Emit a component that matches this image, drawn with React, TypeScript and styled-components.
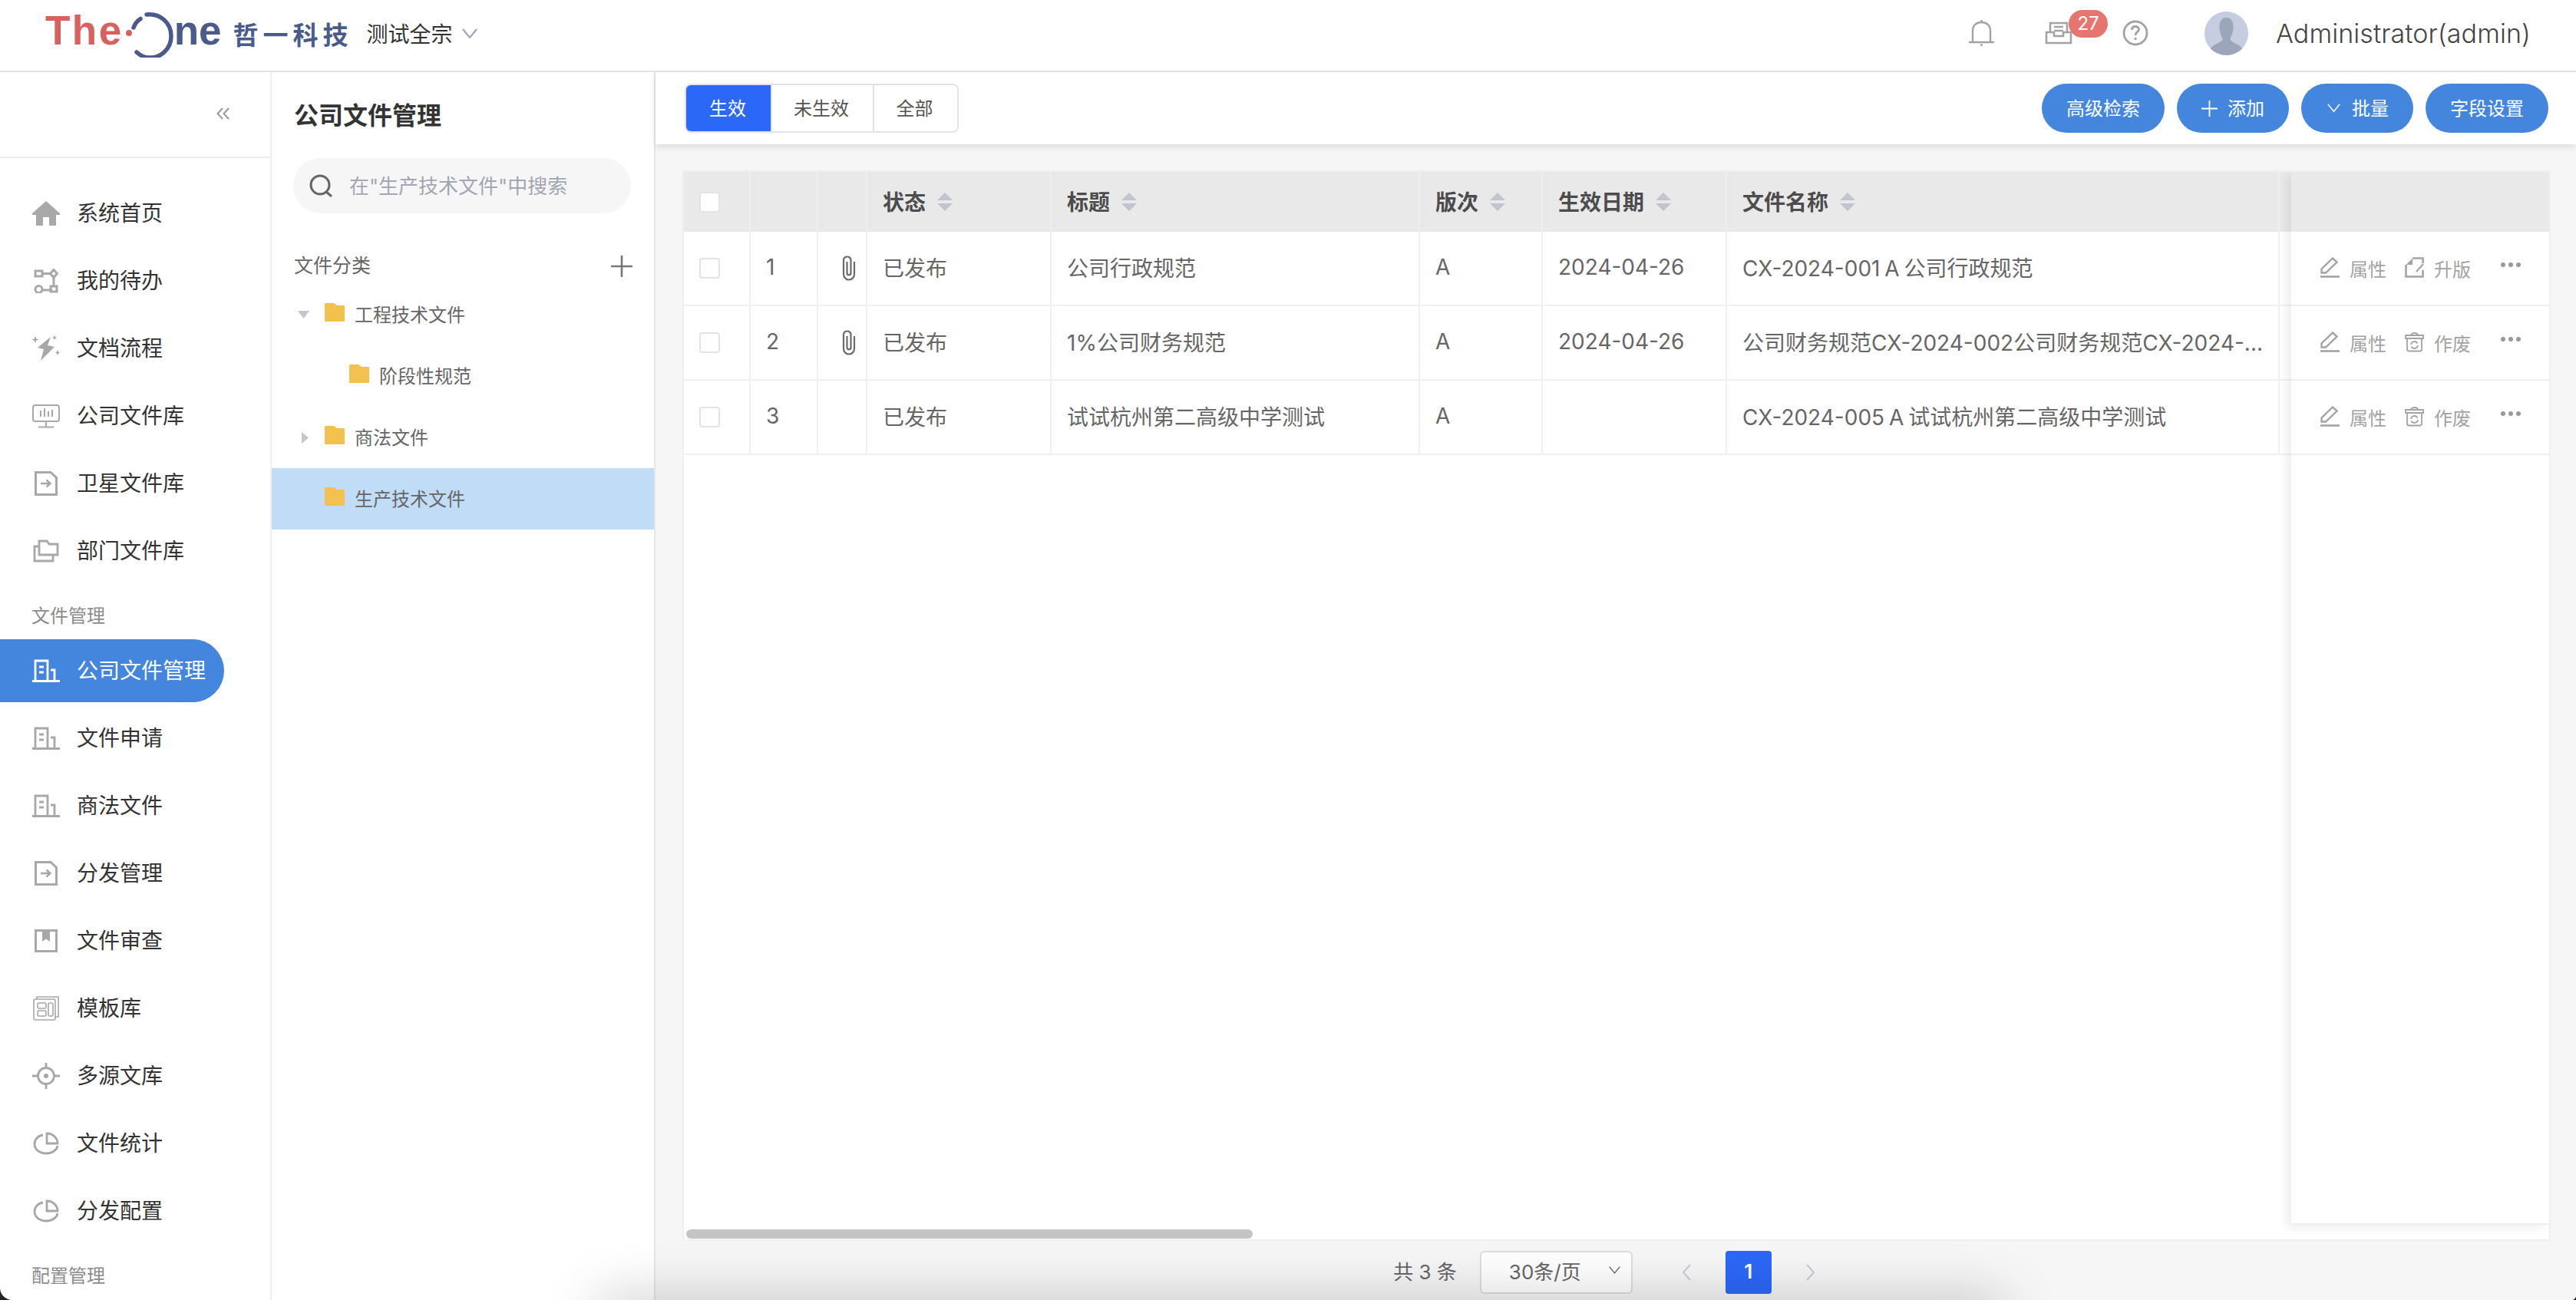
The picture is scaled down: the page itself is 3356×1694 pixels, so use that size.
import React from 'react'
import styled, { createGlobalStyle } from 'styled-components'

const GlobalStyle = createGlobalStyle`
  * { box-sizing: border-box; }
  html, body { margin: 0; padding: 0; background: #1d2a22; }
  body { font-family: Inter, "Noto Sans CJK SC", sans-serif; color: #333; }
`

const { Page, Shade } = {
  Page: styled.div`
    position: relative;
    width: 3356px;
    height: 1694px;
    overflow: hidden;
    background: #fff;
    border-radius: 0 0 6px 16px;
    display: flex;
    flex-direction: column;
  `,
  Shade: styled.div`
    position: absolute;
    left: 780px;
    bottom: -40px;
    width: 1830px;
    height: 40px;
    box-shadow: 0 0 70px rgba(0, 0, 0, 0.26);
    pointer-events: none;
    z-index: 5;
  `
}

/* ---------- header ---------- */

const { Header, Brand, BrandRed, BrandBlue, BrandMark, BrandCn, Scope, ScopeText, ScopeArrow, HeaderRight, IconSlot, Badge, Avatar, UserName } = {
  Header: styled.header`
    height: 94px;
    flex: none;
    border-bottom: 2px solid #e3e3e3;
    display: flex;
    align-items: center;
    padding: 0 59px 0 59px;
  `,
  Brand: styled.div`
    display: flex;
    align-items: center;
    height: 92px;
  `,
  BrandRed: styled.span`
    font-family: "Liberation Sans", sans-serif;
    font-weight: 700;
    font-size: 53px;
    line-height: 60px;
    color: #d9605c;
    letter-spacing: 2.5px;
    margin-top: -12px;
  `,
  BrandBlue: styled.span`
    font-family: "Liberation Sans", sans-serif;
    font-weight: 700;
    font-size: 53px;
    line-height: 60px;
    color: #4a5a8a;
    margin-top: -12px;
  `,
  BrandMark: styled.svg`
    width: 72px;
    height: 66px;
    margin: -8px -6px 0 0;
    flex: none;
  `,
  BrandCn: styled.span`
    margin-left: 15px;
    font-size: 33px;
    font-weight: 700;
    line-height: 40px;
    letter-spacing: 6px;
    color: #4a5a8a;
    white-space: nowrap;
  `,
  Scope: styled.div`
    display: flex;
    align-items: center;
    gap: 12px;
    margin: -6px 0 0 18px;
  `,
  ScopeText: styled.span`
    font-size: 28px;
    color: #333;
  `,
  ScopeArrow: styled.span`
    color: #9aa3b5;
  `,
  HeaderRight: styled.div`
    margin: -6px 0 0 auto;
    display: flex;
    align-items: center;
  `,
  IconSlot: styled.span<{ $ml: number }>`
    position: relative;
    display: flex;
    margin-left: ${({ $ml }) => $ml}px;
    color: #a3a3a3;
  `,
  Badge: styled.span`
    position: absolute;
    left: 31px;
    top: -15px;
    width: 51px;
    height: 36px;
    border-radius: 18px;
    background: #e5756f;
    color: #fff;
    font-size: 24px;
    line-height: 36px;
    text-align: center;
  `,
  Avatar: styled.svg`
    width: 57px;
    height: 57px;
    margin-left: 73px;
    border-radius: 50%;
    flex: none;
  `,
  UserName: styled.span`
    margin-left: 36px;
    font-size: 34px;
    font-weight: 300;
    letter-spacing: 0.1px;
    color: #444;
    white-space: nowrap;
  `
}

const Glyph = styled.svg`
  display: block;
  flex: none;
  fill: none;
  stroke: currentColor;
`

const BellIcon = () => (
  <Glyph width="35" height="35" viewBox="0 0 35 35" strokeWidth="2.4">
    <path d="M1 29 H34 M6 29 V14 C6 7 11 3 17.5 3 C24 3 29 7 29 14 V29" />
    <path d="M17.5 0 V3 M17.5 31 V34" />
  </Glyph>
)
const InboxIcon = () => (
  <Glyph width="36" height="30" viewBox="0 0 36 30" strokeWidth="2.6">
    <path d="M7 14 V2 H29 V14 M12 7 H24 M12 12 H24" />
    <path d="M2 14 H12 V19 H24 V14 H34 V28 H2 Z" />
  </Glyph>
)
const HelpIcon = () => (
  <Glyph width="34" height="34" viewBox="0 0 34 34" strokeWidth="2.8">
    <circle cx="17" cy="17" r="15" />
    <path d="M12.5 13 C12.5 10 14.5 8.5 17 8.5 C19.5 8.5 21.5 10 21.5 12.5 C21.5 15.5 17 15.5 17 20" />
    <path d="M17 23 V26" />
  </Glyph>
)
const ChevronDown = ({ size = 20, weight = 2 }: { size?: number; weight?: number }) => (
  <Glyph width={size} height={size * 0.65} viewBox="0 0 20 13" strokeWidth={weight}>
    <path d="M1 1 L10 12 L19 1" />
  </Glyph>
)

/* ---------- sidebar ---------- */

const { Body, Sidebar, Collapse, CollapseBtn, Nav, SectionLabel, NavItem, NavIcon, NavText } = {
  Body: styled.div`
    flex: 1;
    min-height: 0;
    display: flex;
  `,
  Sidebar: styled.aside`
    width: 354px;
    flex: none;
    border-right: 2px solid #efefef;
    display: flex;
    flex-direction: column;
  `,
  Collapse: styled.div`
    height: 112px;
    flex: none;
    border-bottom: 2px solid #efefef;
    display: flex;
    align-items: center;
    justify-content: flex-end;
    padding: 0 52px 0 0;
  `,
  CollapseBtn: styled.svg`
    width: 18px;
    height: 16px;
    fill: none;
    stroke: #9a9a9a;
    stroke-width: 2;
    margin-top: -2px;
  `,
  Nav: styled.nav`
    display: flex;
    flex-direction: column;
    gap: 6px;
    padding-top: 31px;
  `,
  SectionLabel: styled.div`
    height: 62px;
    padding: 15px 0 0 41px;
    font-size: 24px;
    line-height: 46px;
    color: #8c8c8c;
  `,
  NavItem: styled.a<{ $active?: boolean }>`
    width: 292px;
    height: 82px;
    flex: none;
    display: flex;
    align-items: center;
    gap: 22px;
    padding-left: 42px;
    border-radius: 0 41px 41px 0;
    font-size: 28px;
    color: ${({ $active }) => ($active ? '#fff' : '#333')};
    background: ${({ $active }) => ($active ? '#4486de' : 'transparent')};
  `,
  NavIcon: styled.span<{ $active?: boolean }>`
    width: 36px;
    height: 36px;
    display: flex;
    align-items: center;
    justify-content: center;
    color: ${({ $active }) => ($active ? '#fff' : '#a8a8a8')};
  `,
  NavText: styled.span`
    white-space: nowrap;
    padding-bottom: 4px;
  `
}

const HomeIcon = () => (
  <svg width="36" height="32" viewBox="0 0 36 32" fill="currentColor">
    <path d="M18 0 L36 16 V18 H31 V32 H22 V21 H14 V32 H5 V18 H0 V16 Z" />
  </svg>
)
const TodoIcon = () => (
  <Glyph width="32" height="32" viewBox="0 0 32 32" strokeWidth="3">
    <rect x="2" y="3" width="9" height="7" />
    <path d="M11 6.5 H21 M26 11 V23 M24 28 H12" />
    <path d="M26 1.5 L30.5 6.5 L26 11.5 L21.5 6.5 Z" />
    <rect x="22" y="23" width="8" height="7" />
    <circle cx="6.5" cy="27" r="4.5" />
  </Glyph>
)
const FlowIcon = () => (
  <svg width="36" height="34" viewBox="0 0 36 34" fill="currentColor">
    <path d="M24 2 L7 16 L15 18 L11 33 L29 15 L20 13 Z" />
    <path d="M4 1 L5.3 4.2 L8.5 5.5 L5.3 6.8 L4 10 L2.7 6.8 L-0.5 5.5 L2.7 4.2 Z" />
    <path d="M29 0 L30 2 L32 3 L30 4 L29 6 L28 4 L26 3 L28 2 Z" />
    <path d="M33 19 L34 21.5 L36 22.5 L34 23.5 L33 26 L32 23.5 L30 22.5 L32 21.5 Z" />
  </svg>
)
const ScreenIcon = () => (
  <Glyph width="36" height="31" viewBox="0 0 36 31" strokeWidth="2">
    <rect x="1" y="1" width="34" height="21" rx="3" />
    <path d="M11 8 V16 M16 5 V16 M21 9 V16 M26 7 V16 M18 22 V29 M8 29.5 H28" />
  </Glyph>
)
const FileInIcon = () => (
  <Glyph width="30" height="32" viewBox="0 0 30 32" strokeWidth="3">
    <path d="M1.5 1.5 H21 L28.5 8.5 V30.5 H1.5 Z" />
    <path d="M8 16 H20 M15.5 11.5 L20.5 16 L15.5 20.5" strokeWidth="2.4" />
  </Glyph>
)
const FoldersIcon = () => (
  <Glyph width="34" height="30" viewBox="0 0 34 30" strokeWidth="2.8">
    <path d="M8 20 V2 H18 L21 6 H32 V20 Z" />
    <path d="M8 9 H2 V28 H26 V20" />
  </Glyph>
)
const BuildingIcon = () => (
  <Glyph width="36" height="30" viewBox="0 0 36 30" strokeWidth="2.8">
    <path d="M0 28.5 H36 M4 28 V2 H20 V28 M9 10 H15 M9 17 H15" />
    <path d="M24 14 H29 V28" />
  </Glyph>
)
const BookmarkIcon = () => (
  <Glyph width="30" height="30" viewBox="0 0 30 30" strokeWidth="3">
    <rect x="1.5" y="1.5" width="27" height="27" />
    <path d="M10 2 H20 V16 L15 12.5 L10 16 Z" fill="currentColor" stroke="none" />
  </Glyph>
)
const TemplateIcon = () => (
  <Glyph width="34" height="32" viewBox="0 0 34 32" strokeWidth="1.6">
    <rect x="1" y="4" width="28" height="27" rx="2" />
    <path d="M5 4 V1 H33 V27 H29" />
    <rect x="6" y="9" width="11" height="7" rx="1.5" />
    <rect x="6" y="19" width="11" height="7" rx="1.5" />
    <rect x="20" y="9" width="6" height="17" rx="2" />
  </Glyph>
)
const TargetIcon = () => (
  <Glyph width="36" height="36" viewBox="0 0 36 36" strokeWidth="2.8">
    <circle cx="18" cy="18" r="10.5" />
    <circle cx="18" cy="18" r="3" fill="currentColor" stroke="none" />
    <path d="M18 1 V7 M18 29 V35 M0 18 H7 M29 18 H36" />
  </Glyph>
)
const PieIcon = () => (
  <Glyph width="34" height="30" viewBox="0 0 34 30" strokeWidth="2.8">
    <path d="M13 4 C6 5 2 10 2 16 C2 23 9 28 17 28 C25 28 31 24 32 18" />
    <path d="M18 2 V15 H32 C32 8 26 2 18 2 Z" />
  </Glyph>
)

type NavEntry = { label: string; icon?: React.ReactNode; active?: boolean; section?: boolean }

const navEntries: NavEntry[] = [
  { label: '系统首页', icon: <HomeIcon /> },
  { label: '我的待办', icon: <TodoIcon /> },
  { label: '文档流程', icon: <FlowIcon /> },
  { label: '公司文件库', icon: <ScreenIcon /> },
  { label: '卫星文件库', icon: <FileInIcon /> },
  { label: '部门文件库', icon: <FoldersIcon /> },
  { label: '文件管理', section: true },
  { label: '公司文件管理', icon: <BuildingIcon />, active: true },
  { label: '文件申请', icon: <BuildingIcon /> },
  { label: '商法文件', icon: <BuildingIcon /> },
  { label: '分发管理', icon: <FileInIcon /> },
  { label: '文件审查', icon: <BookmarkIcon /> },
  { label: '模板库', icon: <TemplateIcon /> },
  { label: '多源文库', icon: <TargetIcon /> },
  { label: '文件统计', icon: <PieIcon /> },
  { label: '分发配置', icon: <PieIcon /> },
  { label: '配置管理', section: true }
]

/* ---------- tree panel ---------- */

const { Panel, PanelTitle, Search, SearchText, CatRow, CatLabel, Tree, TreeRow, TreeArrow, TreeFolder, TreeText } = {
  Panel: styled.section`
    width: 500px;
    flex: none;
    border-right: 2px solid #e6e6e6;
    display: flex;
    flex-direction: column;
  `,
  PanelTitle: styled.h2`
    margin: 35px 0 33px 29px;
    font-size: 32px;
    line-height: 44px;
    font-weight: 600;
    color: #333;
  `,
  Search: styled.div`
    height: 72px;
    width: 440px;
    margin-left: 28px;
    border-radius: 36px;
    background: #f6f6f7;
    display: flex;
    align-items: center;
    gap: 22px;
    padding-left: 21px;
    color: #666;
  `,
  SearchText: styled.span`
    font-size: 26px;
    color: #a2a7b2;
    white-space: nowrap;
    padding-bottom: 4px;
  `,
  CatRow: styled.div`
    height: 40px;
    margin: 49px 28px 3px 29px;
    display: flex;
    align-items: center;
    justify-content: space-between;
    color: #777;
  `,
  CatLabel: styled.span`
    font-size: 25px;
    color: #666;
    padding-bottom: 6px;
  `,
  Tree: styled.div`
    display: flex;
    flex-direction: column;
  `,
  TreeRow: styled.div<{ $depth: number; $selected?: boolean }>`
    height: 80px;
    display: flex;
    align-items: center;
    padding-left: ${({ $depth }) => 34 + $depth * 32}px;
    background: ${({ $selected }) => ($selected ? '#c0dcf7' : 'transparent')};
  `,
  TreeArrow: styled.span<{ $inset?: boolean }>`
    width: 35px;
    flex: none;
    display: flex;
    padding-left: ${({ $inset }) => ($inset ? 5 : 0)}px;
    color: #c2c6d0;
  `,
  TreeFolder: styled.svg`
    width: 26px;
    height: 24px;
    flex: none;
    margin-top: -6px;
    fill: #f2c14e;
  `,
  TreeText: styled.span`
    margin-left: 13px;
    font-size: 24px;
    color: #666;
    white-space: nowrap;
    padding-bottom: 4px;
  `
}

const FolderIcon = () => (
  <TreeFolder viewBox="0 0 26 24">
    <path d="M1 0 H12 L16 3 H25 Q26 3 26 4 V23 Q26 24 25 24 H1 Q0 24 0 23 V1 Q0 0 1 0 Z" />
  </TreeFolder>
)
const ArrowDown = () => (
  <svg width="15" height="10" viewBox="0 0 15 10" fill="currentColor"><path d="M0 0 H15 L7.5 10 Z" /></svg>
)
const ArrowRight = () => (
  <svg width="9" height="15" viewBox="0 0 9 15" fill="currentColor"><path d="M0 0 L9 7.5 L0 15 Z" /></svg>
)

const treeRows = [
  { label: '工程技术文件', depth: 0, arrow: 'down' },
  { label: '阶段性规范', depth: 1 },
  { label: '商法文件', depth: 0, arrow: 'right' },
  { label: '生产技术文件', depth: 0, selected: true }
]

/* ---------- main ---------- */

const { Main, Toolbar, Tabs, Tab, Actions, PillButton, BtnIcon, Content, TableCard, DataTable, HeadCell, Cell, CheckCell, ClipCell, HeadInner, HeadText, Check, SortIcon, SortUp, SortDown, Pinned, PinnedHead, PinnedRow, RowAction, ActionText, MoreDots, Scrollbar, Footer, Total, PageSelect, PageArrow, PageNum } = {
  Main: styled.main`
    flex: 1;
    min-width: 0;
    display: flex;
    flex-direction: column;
    background: #f6f6f7;
  `,
  Toolbar: styled.div`
    height: 94px;
    flex: none;
    background: #fff;
    box-shadow: 0 4px 9px rgba(0, 0, 0, 0.1);
    position: relative;
    display: flex;
    align-items: center;
    justify-content: space-between;
    padding: 0 36px 0 38px;
  `,
  Tabs: styled.div`
    display: flex;
    height: 64px;
    border-radius: 8px;
    border: 2px solid #e2e2e8;
    overflow: hidden;
  `,
  Tab: styled.div<{ $w: number; $active?: boolean }>`
    width: ${({ $w }) => $w}px;
    display: flex;
    align-items: center;
    justify-content: center;
    padding: 0 ${({ $active }) => ($active ? 0 : 3)}px 3px 0;
    font-size: 24px;
    color: ${({ $active }) => ($active ? '#fff' : '#555')};
    background: ${({ $active }) => ($active ? '#2c68f7' : '#fff')};
    margin: ${({ $active }) => ($active ? '-2px 0 -2px -2px' : '0')};
    & + & {
      border-left: 2px solid #e2e2e8;
    }
  `,
  Actions: styled.div`
    display: flex;
    gap: 16px;
  `,
  PillButton: styled.button`
    height: 64px;
    padding: 0 32px 3px;
    border: 0;
    border-radius: 32px;
    background: #4486de;
    color: #fff;
    font: inherit;
    font-size: 24px;
    display: flex;
    align-items: center;
    gap: 13px;
  `,
  BtnIcon: styled.span`
    width: 21px;
    display: flex;
    justify-content: center;
    margin-top: 3px;
  `,
  Content: styled.div`
    flex: 1;
    min-height: 0;
    padding: 34px 33px 0 35px;
  `,
  TableCard: styled.div`
    position: relative;
    height: 1395px;
    background: #fff;
    border: 2px solid #eeeef4;
    overflow: hidden;
  `,
  DataTable: styled.table`
    border-collapse: separate;
    border-spacing: 0;
    table-layout: fixed;
    width: 2430px;
  `,
  HeadCell: styled.th`
    height: 78px;
    padding: 0 0 0 20px;
    background: #e9e9ea;
    border-right: 2px solid #eeeef2;
    font-size: 28px;
    font-weight: 600;
    color: #4c4c4c;
    text-align: left;
  `,
  Cell: styled.td`
    height: 97px;
    padding: 0 20px 4px;
    border-right: 2px solid #f0f0f4;
    border-bottom: 2px solid #f0f0f4;
    font-size: 28px;
    word-spacing: -2px;
    color: #666;
    white-space: nowrap;
    overflow: hidden;
  `,
  CheckCell: styled.td`
    height: 97px;
    padding: 0 0 0 20px;
    border-right: 2px solid #f0f0f4;
    border-bottom: 2px solid #f0f0f4;
  `,
  ClipCell: styled.td`
    height: 97px;
    padding: 0 0 0 31px;
    border-right: 2px solid #f0f0f4;
    border-bottom: 2px solid #f0f0f4;
    color: #6a6a6a;
  `,
  HeadInner: styled.div`
    display: flex;
    align-items: center;
    gap: 15px;
  `,
  HeadText: styled.span`
    padding-bottom: 3px;
  `,
  Check: styled.span<{ $head?: boolean }>`
    display: block;
    width: 27px;
    height: 27px;
    border: 2px solid ${({ $head }) => ($head ? '#e4e4e8' : '#e3e3e8')};
    border-radius: 4px;
    background: #fff;
  `,
  SortIcon: styled.span`
    display: flex;
    flex-direction: column;
    gap: 4px;
  `,
  SortUp: styled.span`
    width: 0;
    height: 0;
    border-left: 10px solid transparent;
    border-right: 10px solid transparent;
    border-bottom: 10px solid #c0c4ce;
  `,
  SortDown: styled.span`
    width: 0;
    height: 0;
    border-left: 10px solid transparent;
    border-right: 10px solid transparent;
    border-top: 10px solid #c0c4ce;
  `,
  Pinned: styled.div`
    position: absolute;
    top: 0;
    right: 0;
    width: 336px;
    height: 1372px;
    background: #fff;
    border-bottom: 2px solid #eeeef4;
    box-shadow: -6px 4px 12px rgba(0, 0, 0, 0.07);
  `,
  PinnedHead: styled.div`
    height: 78px;
    background: #e9e9ea;
  `,
  PinnedRow: styled.div`
    height: 97px;
    border-bottom: 2px solid #f0f0f4;
    display: flex;
    align-items: center;
    padding: 0 0 2px 38px;
  `,
  RowAction: styled.span<{ $w: number }>`
    width: ${({ $w }) => $w}px;
    flex: none;
    display: flex;
    align-items: center;
    gap: 13px;
    color: #a3a3a3;
  `,
  ActionText: styled.span`
    font-size: 24px;
    line-height: 30px;
    margin-top: 6px;
  `,
  MoreDots: styled.span`
    width: 26px;
    display: flex;
    justify-content: space-between;
    margin-top: -8px;
    & > i {
      width: 6px;
      height: 6px;
      border-radius: 50%;
      background: #999;
    }
  `,
  Scrollbar: styled.div`
    position: absolute;
    left: 3px;
    bottom: 1px;
    width: 738px;
    height: 12px;
    border-radius: 6px;
    background: #c4c4c4;
  `,
  Footer: styled.div`
    display: flex;
    align-items: center;
    justify-content: center;
    height: 56px;
    margin: 13px 10px 0 0;
  `,
  Total: styled.span`
    font-size: 26px;
    color: #666;
    margin-right: 30px;
    padding-bottom: 6px;
  `,
  PageSelect: styled.div`
    width: 199px;
    height: 56px;
    padding: 0 14px 6px 36px;
    border: 2px solid #dcdce2;
    border-radius: 6px;
    background: #fff;
    font-size: 26px;
    color: #666;
    display: flex;
    align-items: center;
    justify-content: space-between;
    margin-right: 42px;
  `,
  PageArrow: styled.span`
    width: 57px;
    height: 56px;
    display: flex;
    align-items: center;
    justify-content: center;
    color: #c9ccd4;
  `,
  PageNum: styled.span`
    width: 60px;
    height: 56px;
    margin: 0 22px;
    padding-bottom: 4px;
    border-radius: 4px;
    background: #2c68f7;
    color: #fff;
    font-size: 26px;
    font-weight: 600;
    display: flex;
    align-items: center;
    justify-content: center;
  `
}

const PlusIcon = ({ size, weight }: { size: number; weight: number }) => (
  <Glyph width={size} height={size} viewBox="0 0 28 28" strokeWidth={weight}>
    <path d="M14 0 V28 M0 14 H28" />
  </Glyph>
)
const SearchIcon = () => (
  <Glyph width="30" height="30" viewBox="0 0 30 30" strokeWidth="3">
    <circle cx="14" cy="14" r="12" />
    <path d="M22 23 L29 29" />
  </Glyph>
)
const ClipIcon = () => (
  <Glyph width="18" height="33" viewBox="0 0 18 33" strokeWidth="2.2">
    <path d="M6.5 8 V23 C6.5 26 11.5 26 11.5 23 V6 C11.5 0 2 0 2 6 V24 C2 34 16 34 16 24 V8" />
  </Glyph>
)
const PenIcon = () => (
  <Glyph width="25" height="27" viewBox="0 0 25 27" strokeWidth="2.4">
    <path d="M0 25.5 H25" strokeWidth="2.6" />
    <path d="M1.5 20.5 V15.5 L16 1.5 L21.5 6.5 L7 20.5 Z" />
  </Glyph>
)
const UpgradeIcon = () => (
  <Glyph width="25" height="27" viewBox="0 0 25 27" strokeWidth="2.6">
    <path d="M10 1.5 H23.5 V8 M23.5 17 V25.5 H1.5 V10" />
    <path d="M10 1.5 L1.5 10 H10 Z" fill="currentColor" stroke="none" />
    <path d="M15 19 L24 9" strokeWidth="2.2" />
  </Glyph>
)
const TrashIcon = () => (
  <Glyph width="25" height="27" viewBox="0 0 25 27" strokeWidth="1.8">
    <path d="M1 5 H24 V9 H1 Z M8 5 C8 1 17 1 17 5 M3 9 V23 Q3 25.5 5.5 25.5 H19.5 Q22 25.5 22 23 V9" />
    <path d="M8 17 A4.5 4.5 0 0 1 16.5 15.5 M17 18 A4.5 4.5 0 0 1 8.5 19.5" />
  </Glyph>
)

const Sort = () => (
  <SortIcon>
    <SortUp />
    <SortDown />
  </SortIcon>
)

const columns = [
  { key: 'check', width: 87 },
  { key: 'index', width: 88 },
  { key: 'clip', width: 64 },
  { key: 'status', width: 240, title: '状态' },
  { key: 'title', width: 480, title: '标题' },
  { key: 'rev', width: 160, title: '版次' },
  { key: 'date', width: 240, title: '生效日期' },
  { key: 'name', width: 720, title: '文件名称' }
]

const rows = [
  { id: 1, clip: true, status: '已发布', title: '公司行政规范', rev: 'A', date: '2024-04-26', name: 'CX-2024-001 A 公司行政规范', upgrade: true },
  { id: 2, clip: true, status: '已发布', title: '1%公司财务规范', rev: 'A', date: '2024-04-26', name: '公司财务规范CX-2024-002公司财务规范CX-2024-...' },
  { id: 3, clip: false, status: '已发布', title: '试试杭州第二高级中学测试', rev: 'A', date: '', name: 'CX-2024-005 A 试试杭州第二高级中学测试' }
]

function App() {
  return (
    <Page>
      <GlobalStyle />
      <Header>
        <Brand>
          <BrandRed>The</BrandRed>
          <BrandMark viewBox="0 0 72 66" fill="none">
            <circle cx="7" cy="34" r="4" fill="#d9605c" />
            <path d="M13 27 C14.5 22.5 17.5 18.5 22 15.5" stroke="#4a5a8a" strokeWidth="5.5" strokeLinecap="round" />
            <path d="M30 10 C47 8 62 20 62 38 C62 55 48 67 33 66 C27 66 22 63.5 17 59" stroke="#4a5a8a" strokeWidth="5.5" strokeLinecap="round" />
          </BrandMark>
          <BrandBlue>ne</BrandBlue>
          <BrandCn>哲一科技</BrandCn>
        </Brand>
        <Scope>
          <ScopeText>测试全宗</ScopeText>
          <ScopeArrow><ChevronDown /></ScopeArrow>
        </Scope>
        <HeaderRight>
          <IconSlot $ml={0}><BellIcon /></IconSlot>
          <IconSlot $ml={65}>
            <InboxIcon />
            <Badge>27</Badge>
          </IconSlot>
          <IconSlot $ml={65}><HelpIcon /></IconSlot>
          <Avatar viewBox="0 0 57 57">
            <rect width="57" height="57" fill="#c6cde0" />
            <path d="M28.5 8 C36 8 38 15 37.5 22 C37 29 34 33 33.5 36 C33.5 40 45 42 50 49 L50 57 H7 L7 49 C12 42 23.5 40 23.5 36 C23 33 20 29 19.5 22 C19 15 21 8 28.5 8 Z" fill="#9ba5bb" />
          </Avatar>
          <UserName>Administrator(admin)</UserName>
        </HeaderRight>
      </Header>

      <Body>
        <Sidebar>
          <Collapse>
            <CollapseBtn viewBox="0 0 18 16">
              <path d="M8 1 L1.5 8 L8 15 M16 1 L9.5 8 L16 15" />
            </CollapseBtn>
          </Collapse>
          <Nav>
            {navEntries.map((entry) =>
              entry.section ? (
                <SectionLabel key={entry.label}>{entry.label}</SectionLabel>
              ) : (
                <NavItem key={entry.label} $active={entry.active}>
                  <NavIcon $active={entry.active}>{entry.icon}</NavIcon>
                  <NavText>{entry.label}</NavText>
                </NavItem>
              )
            )}
          </Nav>
        </Sidebar>

        <Panel>
          <PanelTitle>公司文件管理</PanelTitle>
          <Search>
            <SearchIcon />
            <SearchText>在"生产技术文件"中搜索</SearchText>
          </Search>
          <CatRow>
            <CatLabel>文件分类</CatLabel>
            <PlusIcon size={28} weight={2.6} />
          </CatRow>
          <Tree>
            {treeRows.map((row) => (
              <TreeRow key={row.label} $depth={row.depth} $selected={row.selected}>
                <TreeArrow $inset={row.arrow === 'right'}>
                  {row.arrow === 'down' && <ArrowDown />}
                  {row.arrow === 'right' && <ArrowRight />}
                </TreeArrow>
                <FolderIcon />
                <TreeText>{row.label}</TreeText>
              </TreeRow>
            ))}
          </Tree>
        </Panel>

        <Main>
          <Toolbar>
            <Tabs>
              <Tab $w={112} $active>生效</Tab>
              <Tab $w={133}>未生效</Tab>
              <Tab $w={110}>全部</Tab>
            </Tabs>
            <Actions>
              <PillButton>高级检索</PillButton>
              <PillButton><BtnIcon><PlusIcon size={21} weight={2.4} /></BtnIcon>添加</PillButton>
              <PillButton><BtnIcon><ChevronDown size={17} weight={1.8} /></BtnIcon>批量</PillButton>
              <PillButton>字段设置</PillButton>
            </Actions>
          </Toolbar>

          <Content>
            <TableCard>
              <DataTable>
                <colgroup>
                  {columns.map((col) => (
                    <col key={col.key} style={{ width: col.width }} />
                  ))}
                  <col />
                </colgroup>
                <thead>
                  <tr>
                    {columns.map((col) => (
                      <HeadCell key={col.key}>
                        {col.key === 'check' && <Check $head />}
                        {col.title && (
                          <HeadInner>
                            <HeadText>{col.title}</HeadText>
                            <Sort />
                          </HeadInner>
                        )}
                      </HeadCell>
                    ))}
                    <HeadCell />
                  </tr>
                </thead>
                <tbody>
                  {rows.map((row) => (
                    <tr key={row.id}>
                      <CheckCell><Check /></CheckCell>
                      <Cell>{row.id}</Cell>
                      <ClipCell>{row.clip && <ClipIcon />}</ClipCell>
                      <Cell>{row.status}</Cell>
                      <Cell>{row.title}</Cell>
                      <Cell>{row.rev}</Cell>
                      <Cell>{row.date}</Cell>
                      <Cell>{row.name}</Cell>
                      <Cell />
                    </tr>
                  ))}
                </tbody>
              </DataTable>

              <Pinned>
                <PinnedHead />
                {rows.map((row) => (
                  <PinnedRow key={row.id}>
                    <RowAction $w={110}>
                      <PenIcon />
                      <ActionText>属性</ActionText>
                    </RowAction>
                    <RowAction $w={125}>
                      {row.upgrade ? <UpgradeIcon /> : <TrashIcon />}
                      <ActionText>{row.upgrade ? '升版' : '作废'}</ActionText>
                    </RowAction>
                    <MoreDots><i /><i /><i /></MoreDots>
                  </PinnedRow>
                ))}
              </Pinned>

              <Scrollbar />
            </TableCard>

            <Footer>
              <Total>共 3 条</Total>
              <PageSelect>
                30条/页
                <ChevronDown size={15} weight={1.6} />
              </PageSelect>
              <PageArrow>
                <Glyph width="13" height="24" viewBox="0 0 13 24" strokeWidth="2"><path d="M11 2 L2 12 L11 22" /></Glyph>
              </PageArrow>
              <PageNum>1</PageNum>
              <PageArrow>
                <Glyph width="13" height="24" viewBox="0 0 13 24" strokeWidth="2"><path d="M2 2 L11 12 L2 22" /></Glyph>
              </PageArrow>
            </Footer>
          </Content>
        </Main>
      </Body>
      <Shade />
    </Page>
  )
}

export default App
